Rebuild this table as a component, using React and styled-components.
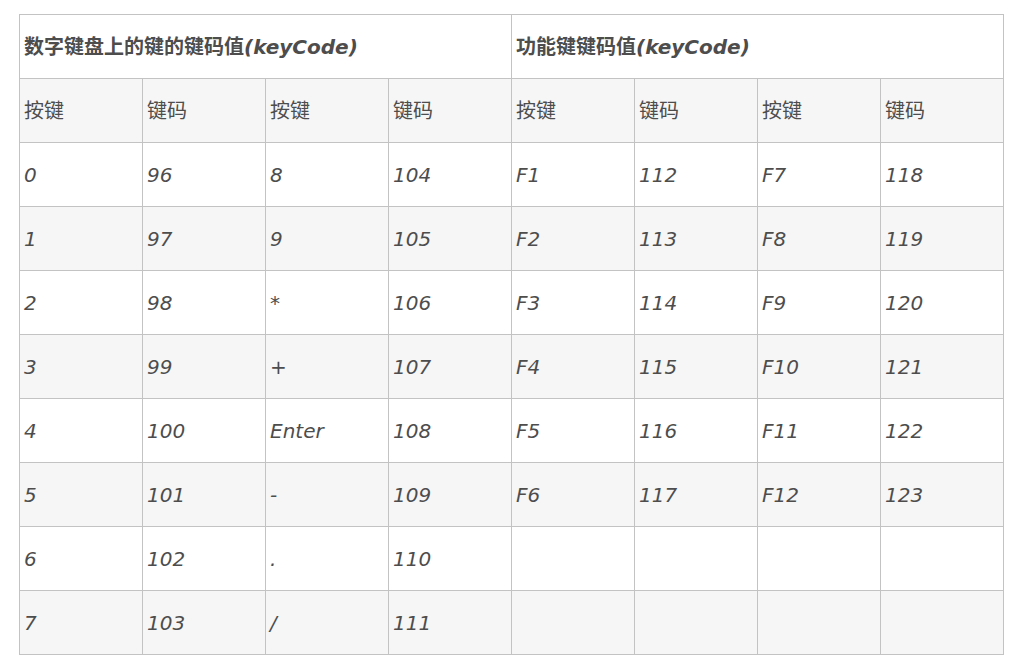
import styled, { createGlobalStyle } from 'styled-components';

const numericKeys = [
  ['0', '96', '8', '104'],
  ['1', '97', '9', '105'],
  ['2', '98', '*', '106'],
  ['3', '99', '+', '107'],
  ['4', '100', 'Enter', '108'],
  ['5', '101', '-', '109'],
  ['6', '102', '.', '110'],
  ['7', '103', '/', '111'],
];

const functionKeys = [
  ['F1', '112', 'F7', '118'],
  ['F2', '113', 'F8', '119'],
  ['F3', '114', 'F9', '120'],
  ['F4', '115', 'F10', '121'],
  ['F5', '116', 'F11', '122'],
  ['F6', '117', 'F12', '123'],
];

const GlobalStyle = createGlobalStyle`
  body {
    margin: 0;
    background: #ffffff;
    font-family: "DejaVu Sans", Verdana, "Noto Sans CJK SC", sans-serif;
  }
`;

export default function App() {
  return (
    <>
      <GlobalStyle />
      <Page>
        <KeyTable>
          <tbody>
            <Row>
              <TitleCell colSpan={4}>
                数字键盘上的键的键码值<em>(keyCode)</em>
              </TitleCell>
              <TitleCell colSpan={4}>
                功能键键码值<em>(keyCode)</em>
              </TitleCell>
            </Row>
            <Row $shade>
              {['按键', '键码', '按键', '键码', '按键', '键码', '按键', '键码'].map(
                (label, i) => (
                  <HeadCell key={i}>{label}</HeadCell>
                ),
              )}
            </Row>
            {numericKeys.map((row, r) => (
              <Row key={r} $shade={r % 2 === 1}>
                {row.map((value, i) => (
                  <Cell key={`n-${i}`}>
                    <em>{value}</em>
                  </Cell>
                ))}
                {(functionKeys[r] || ['', '', '', '']).map((value, i) => (
                  <Cell key={`f-${i}`}>{value && <em>{value}</em>}</Cell>
                ))}
              </Row>
            ))}
          </tbody>
        </KeyTable>
      </Page>
    </>
  );
}

const Page = styled.div`
  padding: 14px 0 0 19px;
`;

const KeyTable = styled.table`
  border-collapse: separate;
  border-spacing: 0;
  table-layout: fixed;
  width: 985px;
  border-top: 1px solid #c3c3c3;
  border-left: 1px solid #c3c3c3;
  color: #4d4d4d;
  font-size: 20px;
`;

const Row = styled.tr`
  background: ${({ $shade }) => ($shade ? '#f6f6f6' : '#ffffff')};
`;

const Cell = styled.td`
  box-sizing: border-box;
  width: 123px;
  height: 64px;
  padding: 0 4px;
  border-right: 1px solid #c3c3c3;
  border-bottom: 1px solid #c3c3c3;
  vertical-align: middle;
  text-align: left;
  white-space: nowrap;
  line-height: 1.2;

  em {
    font-style: italic;
  }
`;

const HeadCell = styled(Cell)``;

const TitleCell = styled(Cell)`
  font-weight: 700;
`;
